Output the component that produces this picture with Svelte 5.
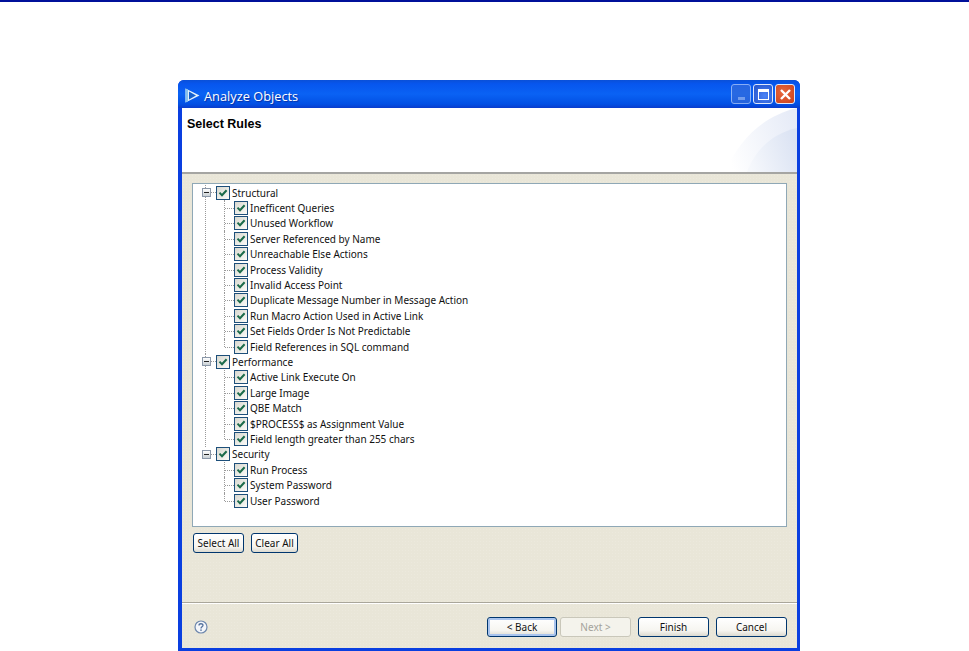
<script lang="ts">
  const groups = [
    {
      name: 'Structural',
      rules: [
        'Inefficent Queries',
        'Unused Workflow',
        'Server Referenced by Name',
        'Unreachable Else Actions',
        'Process Validity',
        'Invalid Access Point',
        'Duplicate Message Number in Message Action',
        'Run Macro Action Used in Active Link',
        'Set Fields Order Is Not Predictable',
        'Field References in SQL command'
      ]
    },
    {
      name: 'Performance',
      rules: [
        'Active Link Execute On',
        'Large Image',
        'QBE Match',
        '$PROCESS$ as Assignment Value',
        'Field length greater than 255 chars'
      ]
    },
    {
      name: 'Security',
      rules: ['Run Process', 'System Password', 'User Password']
    }
  ];
</script>

{#snippet check()}
  <span class="check">
    <svg width="10" height="10" viewBox="0 0 10 10"><path d="M1.5 4.6 L4 7.2 L8.6 2.2" fill="none" stroke="#1b6b4a" stroke-width="2"/></svg>
  </span>
{/snippet}

<div class="topline"></div>
<main class="window">
  <div class="titlebar">
    <svg class="appicon" width="15" height="15" viewBox="0 0 15 15">
      <path d="M0.5 0.5 L14.5 7.5 L0.5 14.5 Z" fill="#e4f2fc"/>
      <path d="M4 3.5 L11 7.5 L4 11.5 Z" fill="#1560cc"/>
      <path d="M0.5 0.5 L3 1.8 L3 13.2 L0.5 14.5 Z" fill="#86c0ec"/>
    </svg>
    <span class="title">Analyze Objects</span>
    <div class="winbtns">
      <span class="winbtn min"><i></i></span>
      <span class="winbtn max"><i></i></span>
      <span class="winbtn close">
        <svg width="13" height="13" viewBox="0 0 13 13"><path d="M2 2 L11 11 M11 2 L2 11" stroke="#fff" stroke-width="2.4"/></svg>
      </span>
    </div>
  </div>
  <div class="inner">
    <header class="banner">
      <h1>Select Rules</h1>
      <svg class="swoosh" width="72" height="64" viewBox="0 0 72 64">
        <defs>
          <linearGradient id="sw" x1="0" y1="0.6" x2="1" y2="0.3">
            <stop offset="0" stop-color="#fff"/>
            <stop offset="1" stop-color="#e6ebf7"/>
          </linearGradient>
          <linearGradient id="sw2" x1="0" y1="0.7" x2="1" y2="0.4">
            <stop offset="0" stop-color="#f6f8fc"/>
            <stop offset="1" stop-color="#dbe3f3"/>
          </linearGradient>
        </defs>
        <path d="M0 64 C14 32 38 8 72 0 L72 64 Z" fill="url(#sw)"/>
        <path d="M22 64 C30 42 48 25 72 20 L72 64 Z" fill="url(#sw2)"/>
      </svg>
    </header>
    <section class="content">
      <div class="tree">
        {#each groups as g}
          <div class="group">
            <div class="row top">
              <span class="toggle"><i></i></span>
              <span class="stub"></span>
              {@render check()}
              <span class="label">{g.name}</span>
            </div>
            <div class="children">
              {#each g.rules as r}
                <div class="row">
                  <span class="elbow"></span>
                  {@render check()}
                  <span class="label">{r}</span>
                </div>
              {/each}
            </div>
          </div>
        {/each}
      </div>
      <div class="actions">
        <button class="btn small">Select All</button>
        <button class="btn small">Clear All</button>
      </div>
    </section>
    <footer class="footer">
      <svg class="help" width="14" height="14" viewBox="0 0 14 14">
        <circle cx="7" cy="7" r="6" fill="#f4f6fa" stroke="#6d87ad" stroke-width="1.2"/>
        <path d="M5 5.4 C5 3.2 9 3.2 9 5.3 C9 6.8 7 6.8 7 8.4" fill="none" stroke="#52709c" stroke-width="1.3"/>
        <rect x="6.3" y="9.4" width="1.4" height="1.5" fill="#52709c"/>
      </svg>
      <div class="navbtns">
        <button class="btn nav default">&lt; Back</button>
        <button class="btn nav" disabled>Next &gt;</button>
        <button class="btn nav">Finish</button>
        <button class="btn nav">Cancel</button>
      </div>
    </footer>
  </div>
</main>

<style>
  :global(body) {
    margin: 0;
    background: #fff;
    font-family: "Noto Sans", "Liberation Sans", sans-serif;
    font-size: 10px;
    color: #111;
  }

  .topline {
    height: 2px;
    background: #00109a;
  }

  .window {
    box-sizing: border-box;
    width: 622px;
    height: 571px;
    margin: 78px 0 0 178px;
    display: flex;
    flex-direction: column;
    background: #0a3fe0;
    border-radius: 6px 6px 0 0;
  }

  .titlebar {
    box-sizing: border-box;
    height: 28px;
    flex: none;
    display: flex;
    align-items: center;
    padding: 3px 5px 0 7px;
    background: linear-gradient(#0a50d8 0%, #0756ee 14%, #0a62f4 50%, #0250e4 86%, #0a3ccc 100%);
    border-radius: 6px 6px 0 0;
    color: #fff;
  }

  .appicon {
    margin-right: 4px;
    margin-top: -1px;
  }

  .title {
    font-family: "Open Sans", sans-serif;
    font-size: 12.8px;
    font-weight: 500;
    text-shadow: 1px 1px 1px #0a2fa0;
  }

  .winbtns {
    margin-left: auto;
    margin-top: -3px;
    display: flex;
    gap: 2px;
  }

  .winbtn {
    box-sizing: border-box;
    width: 20px;
    height: 20px;
    border: 1px solid #dfe8fb;
    border-radius: 3px;
    display: flex;
    align-items: center;
    justify-content: center;
  }

  .min {
    background: #3d6fd8;
    opacity: 0.6;
  }

  .min i {
    width: 7px;
    height: 3px;
    background: #b9c9ee;
    margin-top: 8px;
  }

  .max {
    background: radial-gradient(circle at 60% 60%, #4a82f6, #2452c8);
  }

  .max i {
    box-sizing: border-box;
    width: 11px;
    height: 11px;
    border: 1px solid #fff;
    border-top-width: 3px;
  }

  .close {
    background: radial-gradient(circle at 40% 40%, #e8683e, #c9401a);
  }

  .inner {
    flex: 1;
    min-height: 0;
    margin: 0 3px 3px 4px;
    display: flex;
    flex-direction: column;
    background-color: #e9e6d8;
    background-image: radial-gradient(#ecE9dd 0.6px, transparent 0.8px);
    background-size: 3px 3px;
  }

  .banner {
    height: 64px;
    flex: none;
    background: #fff;
    border-bottom: 2px solid #a5a5a2;
    position: relative;
    overflow: hidden;
  }

  .banner h1 {
    margin: 9px 0 0 5px;
    font-family: "Liberation Sans", sans-serif;
    font-size: 12.5px;
    font-weight: 700;
    color: #000;
  }

  .swoosh {
    position: absolute;
    right: 0;
    bottom: 0;
  }

  .content {
    flex: 1;
    padding: 9px 10px 0 10px;
  }

  .tree {
    box-sizing: border-box;
    height: 344px;
    background: #fff;
    border: 1px solid #8fa8b6;
    padding: 1px 0 0 12px;
  }

  .group {
    border-left: 1px dotted #9a9a9a;
  }

  /* trunk starts at the first toggle, not above it */
  .group:first-child {
    margin-top: 7.7px;
  }

  .group:first-child > .top {
    margin-top: -7.7px;
  }

  .group:last-child {
    border-left-color: transparent;
  }

  .row {
    height: 15.4px;
    display: flex;
    align-items: center;
    white-space: nowrap;
  }

  .toggle {
    box-sizing: border-box;
    width: 9px;
    height: 9px;
    margin-left: -4px;
    border: 1px solid #8a97a8;
    background: linear-gradient(#fff, #c9d0d4);
    display: flex;
    align-items: center;
    justify-content: center;
    flex: none;
  }

  .toggle i {
    width: 5px;
    height: 1px;
    background: #222;
  }

  .stub {
    width: 5px;
    height: 0;
    border-top: 1px dotted #9a9a9a;
    flex: none;
  }

  .children {
    margin-left: 18px;
  }

  .elbow {
    box-sizing: border-box;
    width: 10px;
    align-self: stretch;
    flex: none;
    position: relative;
    border-left: 1px dotted #9a9a9a;
  }

  .elbow::after {
    content: "";
    position: absolute;
    left: 0;
    right: 0;
    top: 50%;
    border-top: 1px dotted #9a9a9a;
  }

  .row:last-child > .elbow {
    align-self: flex-start;
    height: 50%;
  }

  .row:last-child > .elbow::after {
    top: 100%;
  }

  .check {
    box-sizing: border-box;
    width: 14px;
    height: 14px;
    border: 1.5px solid #1d4f7a;
    background: linear-gradient(135deg, #d8d8d0, #fbfbf8);
    display: flex;
    align-items: center;
    justify-content: center;
    flex: none;
  }

  .label {
    margin-left: 2px;
  }

  .actions {
    display: flex;
    gap: 7px;
    margin-top: 6px;
    padding-left: 1px;
  }

  .btn {
    box-sizing: border-box;
    height: 20px;
    padding: 0;
    border: 1px solid #00366e;
    border-radius: 3px;
    background: linear-gradient(#fff 0%, #f6f5f0 70%, #dcdad0 100%);
    font: inherit;
    color: #111;
  }

  .btn.small:first-child {
    width: 51px;
  }

  .btn.small {
    width: 47px;
  }

  .footer {
    box-sizing: border-box;
    height: 46px;
    flex: none;
    border-top: 1px solid #a9a69a;
    box-shadow: inset 0 1px 0 #fff;
    display: flex;
    align-items: center;
    padding: 3px 10px 0 12px;
  }

  .help {
    flex: none;
  }

  .navbtns {
    margin-left: auto;
    display: flex;
    gap: 7px;
  }

  .btn.nav {
    width: 71px;
  }

  .btn.nav:nth-child(2) {
    margin-left: -4px;
  }

  .btn.default {
    width: 70px;
    box-shadow: inset 0 0 0 2px #a9c4ee;
  }

  .btn:disabled {
    border-color: #c9c7ba;
    background: #f4f3ec;
    color: #a3a29a;
  }
</style>
